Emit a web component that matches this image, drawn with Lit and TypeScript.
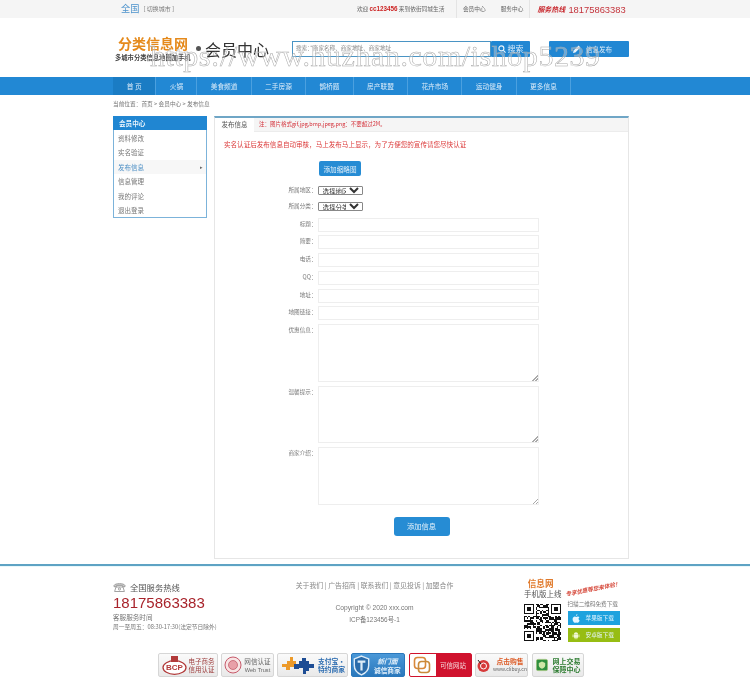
import { LitElement, html, css, svg } from "lit";
import { customElement } from "lit/decorators.js";

const qrModules = () => {
  const n = 25;
  const out: unknown[] = [];
  let seed = 73;
  const inFinder = (x: number, y: number) =>
    (x < 8 && y < 8) || (x > n - 9 && y < 8) || (x < 8 && y > n - 9);
  for (let y = 0; y < n; y++) {
    for (let x = 0; x < n; x++) {
      seed = (seed * 137 + 51) % 1009;
      if (!inFinder(x, y) && seed % 100 < 56) out.push(svg`<rect x=${x} y=${y} width="1" height="1"/>`);
    }
  }
  for (const [fx, fy] of [[0, 0], [n - 7, 0], [0, n - 7]]) {
    out.push(svg`<path d="M${fx} ${fy}h7v7h-7zM${fx + 1} ${fy + 1}v5h5v-5zM${fx + 2} ${fy + 2}h3v3h-3z" fill-rule="evenodd"/>`);
  }
  return out;
};

@customElement("app-root")
export class AppRoot extends LitElement {
  static styles = css`
    :host { display: block; position: relative; width: 750px; height: 689px; overflow: hidden; background: #fff;
      font-family: "Noto Sans CJK SC", "Liberation Sans", sans-serif; font-size: 6.6px; color: #666; line-height: 1; }
    .page { filter: blur(0.3px); height: 689px; }
    .wm { position: absolute; left: 150px; top: 41.4px; font: 30px/1 "Liberation Serif", serif; letter-spacing: .55px; white-space: nowrap;
      color: rgba(255,255,255,.3); -webkit-text-stroke: .5px #a8a8a8; pointer-events: none; filter: blur(.25px); }

    .top { height: 18px; background: #f5f5f5; display: flex; align-items: center; padding-left: 121px; }
    .city { font-size: 9.2px; color: #4d93cc; }
    .switch { margin-left: 4px; font-size: 6px; color: #777; width: 30.5px; white-space: nowrap; }
    .welcome { margin-left: 183px; width: 99px; white-space: nowrap; font-size: 5.7px; }
    .welcome b { color: #c22; font-family: "Liberation Sans", sans-serif; font-size: 6.3px; }
    .tl { height: 18px; display: flex; align-items: center; border-left: 1px solid #e4e4e4; padding: 0 7px 0 6px; font-size: 5.7px; }
    .tl + .tl { border-left: 0; padding-left: 8px; padding-right: 6px; }
    .hot { border-left: 1px solid #e4e4e4; padding-left: 7px; display: flex; align-items: center; height: 18px; }
    .hot i { font: italic 700 7px "Noto Sans CJK SC", sans-serif; color: #c8282e; }
    .hot b { margin-left: 3px; font: 400 9.4px "Liberation Sans", sans-serif; color: #c4343c; }

    .head { height: 59px; padding-left: 113px; display: flex; box-sizing: border-box; }
    .logo { width: 85px; padding: 18px 0 0 2px; box-sizing: border-box; }
    .logo h1 { margin: 0 0 0 3px; font: 700 14px/15px "Noto Sans CJK SC", sans-serif; color: #e58a1c; }
    .logo p { margin: 4px 0 0; font-size: 6.3px; font-weight: 700; color: #444; white-space: nowrap; }
    .title { width: 94px; padding-top: 22px; box-sizing: border-box; display: flex; align-items: flex-start; font-size: 16px; line-height: 18px; color: #333; }
    .title i { width: 5px; height: 5px; border-radius: 50%; background: #555; margin: 6px 4px 0 -2px; }
    .search { margin-top: 23px; width: 199px; height: 16px; box-sizing: border-box; border: 1px solid #4a94c4; background: #fff; padding: 4px 0 0 3px; font-size: 5.6px; color: #888; white-space: nowrap; }
    .sbtn, .pub { margin-top: 23px; height: 16px; background: #2187d3; color: #dcecf8; display: flex; align-items: center; justify-content: center; border-radius: 1px; }
    .sbtn { width: 39px; gap: 2px; font-size: 8px; }
    .pub { width: 80px; margin-left: 19px; gap: 5px; font-size: 6.5px; padding-left: 7px; box-sizing: border-box; }

    nav { height: 18px; background: #2288d4; padding-left: 113px; display: flex; }
    nav a { display: flex; align-items: center; padding: 0 13.3px; border-right: 1px solid #4ba0df; color: #dcecf9; font-size: 6.7px; }
    nav a.on { background: #1a7cc4; padding: 0 13.8px; }
    .crumb { padding: 6px 0 0 113px; height: 21px; box-sizing: border-box; font-size: 5.7px; color: #777; }

    .body { display: flex; padding-left: 113px; gap: 7px; height: 443px; }
    .side { width: 94px; height: 102px; box-sizing: border-box; border: 1px solid #7cb3da; }
    .side h3 { margin: -1px -1px 0; height: 14px; background: #2086d2; color: #e8f3fb; font: 700 6.6px/14px "Noto Sans CJK SC", sans-serif; padding-left: 6px; }
    .side ul { list-style: none; margin: 0; padding: 1px 0 0 4px; }
    .side li { height: 14.4px; line-height: 14.4px; font-size: 6.5px; color: #777; display: flex; justify-content: space-between; padding-right: 3px; }
    .side li.on { background: #f7f7f7; color: #4d8fc5; margin-left: -4px; padding-left: 4px; }
    .side li.on span + span { color: #666; font-size: 5px; }

    .panel { width: 415px; box-sizing: border-box; border: 1px solid #e6e6e6; border-top: 2px solid #6fa6c6; }
    .tabs { display: flex; height: 13px; background: #f5f5f5; border-bottom: 1px solid #ececec; box-sizing: content-box; }
    .tab { width: 39px; background: #fff; text-align: center; line-height: 13px; font-size: 6.5px; color: #555; height: 14px; }
    .note { margin-left: 5px; line-height: 13px; font-size: 5.5px; color: #d4313a; }
    .warn { margin: 8px 0 0 9px; font-size: 6.55px; line-height: 8px; color: #dc3b3b; height: 8px; white-space: nowrap; }
    .thumb { display: block; margin: 13px 0 0 104px; width: 42px; height: 15px; }
    .btn { border: 0; padding: 0; background: #268cd4; border-radius: 2px; color: #e2f0fa; font: 6.6px "Noto Sans CJK SC", sans-serif; }
    form { margin-top: 9.500px; display: grid; grid-template-columns: 102.5px 221px; align-items: start; }
    label { text-align: right; font-size: 5.6px; color: #777; padding-right: 1px; white-space: nowrap; line-height: 13px; }
    select { width: 45px; height: 9px; font: 6.5px "Liberation Sans", "Noto Sans CJK SC", sans-serif; color: #333; padding: 0; margin: 0 0 7px; border: 1px solid #888; border-radius: 1px; background: #fff; }
    .sellab { line-height: 9px; }
    input, textarea { display: block; box-sizing: border-box; width: 221px; border: 1px solid #eeeeee; background: #fff; margin: 0; padding: 0; }
    input { height: 14px; margin-bottom: 3.8px; }
    textarea { height: 57.7px; margin-bottom: 3.8px; }
    textarea::-webkit-resizer { background: linear-gradient(135deg, transparent 50%, #aaa 50%, #aaa 60%, transparent 60%, transparent 75%, #aaa 75%, #aaa 85%, transparent 85%) right bottom / 6px 6px no-repeat; }
    .submit { display: block; margin: 8.300px 0 0 178.5px; width: 56px; height: 18.5px; font-size: 7.3px; border-radius: 3px; }

    footer { margin-top: 5px; border-top: 2px solid #5ea3c4; box-shadow: inset 0 1px 0 #e9f8fb; position: relative; height: 123px; box-sizing: border-box; padding-left: 113px; }
    .fcols { display: flex; height: 87px; }
    .fl { width: 155px; padding-top: 16px; box-sizing: border-box; }
    .hl { display: flex; align-items: center; gap: 4px; font-size: 8.3px; color: #555; height: 10px; }
    .tel { font: 400 15px/16px "Liberation Sans", sans-serif; color: #a8232b; margin-top: 3px; }
    .fl p { margin: 3px 0 0; font-size: 6.6px; color: #777; white-space: nowrap; }
    .fl p + p { margin-top: 3.5px; font-size: 5.75px; }
    .fc { width: 185px; padding-top: 15.5px; box-sizing: border-box; text-align: center; font-size: 6.9px; color: #888; margin-left: 14px; }
    .fc div { white-space: nowrap; }
    .copy { margin-top: 16.3px; color: #777; font-family: "Liberation Sans", "Noto Sans CJK SC", sans-serif; font-size: 6.65px; }
    .icp { margin-top: 5.4px; color: #777; font-family: "Liberation Sans", "Noto Sans CJK SC", sans-serif; font-size: 6.4px; }
    .fr { margin-left: 57px; width: 100px; padding-top: 13px; box-sizing: border-box; position: relative; flex: none; }
    .fr h4 { margin: 0 0 0 3.7px; font: 700 8.6px/9px "Noto Sans CJK SC", sans-serif; color: #e07a2c; }
    .fr .mob { margin-top: 2px; font-size: 7.5px; line-height: 8px; color: #555; }
    .slogan { position: absolute; left: 41px; top: 18.7px; font: italic 700 5.6px "Noto Sans CJK SC", sans-serif; color: #d6493b; transform: rotate(-11deg); white-space: nowrap; }
    .qrrow { display: flex; margin-top: 6px; gap: 6.5px; }
    .qrrow > svg { width: 37px; height: 37px; display: block; }
    .dl { margin-top: -3px; font-size: 5.6px; color: #777; line-height: 6px; width: 52px; white-space: nowrap; }
    .app { height: 14px; margin-top: 3px; display: flex; align-items: center; gap: 6px; padding-left: 4px; box-sizing: border-box; color: #e6f6ff; font-size: 5.7px; }
    .app.ios { background: #1ea2de; margin-top: 4px; }
    .app.and { background: #97bd13; }

    .badges { display: flex; margin-left: 45px; height: 24px; }
    .bd { height: 24px; box-sizing: border-box; border: 1px solid #d6d6d6; border-radius: 2px; background: linear-gradient(#fafafa, #e9e9e9); display: flex; align-items: center; justify-content: center; gap: 2px; font-size: 6.5px; color: #666; line-height: 8.5px; text-align: center; overflow: hidden; flex: none; white-space: nowrap; }
    .bd svg { flex: none; display: block; }
    .b1 { width: 60px; }
    .b2 { width: 53px; margin-left: 3px; font-size: 6.6px; }
    .b2 small { font: 5.6px "Liberation Sans", sans-serif; }
    .b3 { width: 71px; margin-left: 3px; font-size: 6.8px; color: #2a6bb0; font-weight: 700; }
    .b4 { width: 54px; margin-left: 3px; background: linear-gradient(#4a98d8, #2a78bc); border-color: #2a78bc; color: #e4f1fb; font-weight: 700; font-size: 6.7px; justify-content: flex-start; padding-left: 1px; gap: 4px; }
    .b4 em { font: italic 700 6.8px "Noto Sans CJK SC", sans-serif; }
    .b5 { width: 63px; margin-left: 4px; background: linear-gradient(90deg, #fff 0 42%, #d0122d 42%); border-color: #d0122d; color: #f7d8dc; justify-content: flex-start; gap: 9px; padding-left: 3px; }
    .b6 { width: 53px; margin-left: 3px; font-size: 5px; line-height: 7.5px; }
    .b6 b { color: #dc5a24; font-size: 6.8px; }
    .b7 { width: 52px; margin-left: 4px; gap: 5px; color: #2f7d32; font-weight: 700; font-size: 7px; }
    .red-t { color: #9c3b3b; }
  `;

  render() {
    const navs = ["首 页", "火锅", "美食频道", "二手房源", "鹊桥题", "房产联盟", "花卉市场", "运动健身", "更多信息"];
    const side = ["资料修改", "实名验证", "发布信息", "信息管理", "我的评论", "退出登录"];
    const inputs = ["标题", "简要", "电话", "QQ", "地址", "地图链接"];
    const areas = ["优惠信息", "温馨提示", "商家介绍"];
    return html`
      <div class="page">
        <div class="top">
          <span class="city">全国</span><span class="switch">[ 切换城市 ]</span>
          <span class="welcome">欢迎 <b>cc123456</b> 来到依街同城生活</span>
          <span class="tl">会员中心</span><span class="tl">服务中心</span>
          <span class="hot"><i>服务热线</i><b>18175863383</b></span>
        </div>

        <div class="head">
          <div class="logo"><h1>分类信息网</h1><p>多城市分类信息地图加手机</p></div>
          <div class="title"><i></i>会员中心</div>
          <div class="search">搜索：商家名称、商家地址、商家地址</div>
          <div class="sbtn">
            <svg width="8" height="8" viewBox="0 0 9 9" fill="none" stroke="#e8f3fb" stroke-width="1.3"><circle cx="3.8" cy="3.8" r="2.8"/><path d="M6 6l2.5 2.500"/></svg>
            搜索
          </div>
          <div class="pub">
            <svg width="8" height="8" viewBox="0 0 8 8" fill="#e8f3fb"><path d="M0 8l.6-2.400L5.600.6l1.800 1.800-5 5z"/></svg>
            信息发布
          </div>
        </div>

        <nav>${navs.map((n, i) => html`<a class=${i === 0 ? "on" : ""}>${n}</a>`)}</nav>
        <div class="crumb">当前位置：首页 &gt; 会员中心 &gt; 发布信息</div>

        <div class="body">
          <aside class="side">
            <h3>会员中心</h3>
            <ul>${side.map((s, i) => html`<li class=${i === 2 ? "on" : ""}><span>${s}</span>${i === 2 ? html`<span>▸</span>` : ""}</li>`)}</ul>
          </aside>
          <section class="panel">
            <div class="tabs"><div class="tab">发布信息</div><div class="note">注：图片格式gif,jpg,bmp,jpeg,png：不要超过2M。</div></div>
            <div class="warn">实名认证后发布信息自动审核，马上发布马上显示，为了方便您的宣传请您尽快认证</div>
            <button class="btn thumb" type="button">添加缩略图</button>
            <form>
              <label class="sellab">所属地区：</label><select><option>选择地区</option></select>
              <label class="sellab">所属分类：</label><select><option>选择分类</option></select>
              ${inputs.map((l) => html`<label>${l}：</label><input type="text" />`)}
              ${areas.map((l) => html`<label>${l}：</label><textarea></textarea>`)}
            </form>
            <button class="btn submit" type="button">添加信息</button>
          </section>
        </div>

        <footer>
          <div class="fcols">
            <div class="fl">
              <div class="hl">
                <svg width="13" height="10" viewBox="0 0 13 10" fill="none" stroke="#999" stroke-width=".9"><path d="M1 3.500C2 1 11 1 12 3.500v1.200H9.400V3.400H3.600v1.300H1z" fill="#ccc"/><path d="M3 5h7l1.400 4.500H1.600z"/><circle cx="6.500" cy="7" r="1.100"/></svg>
                全国服务热线
              </div>
              <div class="tel">18175863383</div>
              <p>客服服务时间</p>
              <p>周一至周五：08:30-17:30(法定节日除外)</p>
            </div>
            <div class="fc">
              <div>关于我们 | 广告招商 | 联系我们 | 意见投诉 | 加盟合作</div>
              <div class="copy">Copyright © 2020 xxx.com</div>
              <div class="icp">ICP备123456号-1</div>
            </div>
            <div class="fr">
              <h4>信息网</h4>
              <div class="mob">手机版上线</div>
              <div class="slogan">专享优惠等您来体验！</div>
              <div class="qrrow">
                <svg viewBox="0 0 25 25" fill="#111" shape-rendering="crispEdges">${qrModules()}</svg>
                <div class="dl">
                  扫描二维码免费下载
                  <div class="app ios">
                    <svg width="8" height="9" viewBox="0 0 8 9" fill="#e6f6ff"><path d="M5.400.2c0 .9-.7 1.600-1.500 1.600C3.900.9 4.600.2 5.400.2zM6.600 4.800c0-.9.6-1.300.9-1.500-.5-.7-1.300-.8-1.600-.8-.7 0-1.200.4-1.600.4s-.9-.4-1.500-.4C1.900 2.500.6 3.300.6 5.200.6 6.700 1.800 8.800 2.800 8.800c.5 0 .8-.4 1.400-.4s.8.400 1.400.4c1 0 1.800-1.600 2-2.300-.1 0-1-.5-1-1.700z"/></svg>
                    <span>苹果版下载</span>
                  </div>
                  <div class="app and">
                    <svg width="8" height="9" viewBox="0 0 8 9" fill="#f1f8d8"><path d="M2 3.300h4v3.400H5.300v1.600h-.8V6.700h-1v1.600h-.8V6.700H2zM2 3c0-1 .9-1.800 2-1.800S6 2 6 3zM.6 3.400h.9v2.800H.6zM6.500 3.400h.9v2.800h-.9z"/></svg>
                    <span>安卓版下载</span>
                  </div>
                </div>
              </div>
            </div>
          </div>

          <div class="badges">
            <div class="bd b1">
              <svg width="25" height="19" viewBox="0 0 25 19"><ellipse cx="12.500" cy="11.500" rx="11.500" ry="6.800" fill="#fff" stroke="#b23a3a" stroke-width="1.300"/><rect x="9" y="0" width="7" height="6" fill="#b23a3a"/><text x="12.500" y="14" text-anchor="middle" font-family="Liberation Sans" font-weight="700" font-size="8" fill="#b23a3a">BCP</text></svg>
              <span class="red-t">电子商务<br />信用认证</span>
            </div>
            <div class="bd b2">
              <svg width="18" height="18" viewBox="0 0 18 18"><circle cx="9" cy="9" r="8" fill="#f8e4e4" stroke="#c65a6a"/><circle cx="9" cy="9" r="4.500" fill="#e8a0a8" stroke="#b5404f" stroke-width=".6"/></svg>
              <span>网信认证<br /><small>Web Trust</small></span>
            </div>
            <div class="bd b3">
              <svg width="36" height="20" viewBox="0 0 34 20"><path d="M1 9h5V6h3V2h3v4h3v3h-2v3H9v3H5v-3H1z" fill="#ec9a2a"/><path d="M13 9h5V6h3V3h4v3h3v3h5v4h-5v3h-3v3h-3v-6h-4v1h-5z" fill="#1e4d94"/></svg>
              <span>支付宝·<br />特约商家</span>
            </div>
            <div class="bd b4">
              <svg width="17" height="21" viewBox="0 0 15 19"><path d="M7.500 1l6.500 2.500v6c0 4-3 7-6.500 8.500C4 16.500 1 13.500 1 9.500v-6z" fill="#2a6cab" stroke="#dcebf7" stroke-width="1.300"/><path d="M4 5h7v2H8.500v7h-2V7H4z" fill="#dcebf7"/></svg>
              <span><em>新门面</em><br />诚信商家</span>
            </div>
            <div class="bd b5">
              <svg width="18" height="18" viewBox="0 0 18 18" fill="none" stroke="#d8883a" stroke-width="1.600"><rect x="1.500" y="1.500" width="11" height="11" rx="3"/><rect x="5.500" y="5.500" width="11" height="11" rx="3" stroke="#c98a3a"/></svg>
              <span>可信网站</span>
            </div>
            <div class="bd b6">
              <svg width="15" height="16" viewBox="0 0 15 16"><circle cx="7.500" cy="9" r="6" fill="#d63a3a"/><circle cx="7.500" cy="9" r="3" fill="none" stroke="#fff"/><path d="M2 3l3 4" stroke="#222"/></svg>
              <span><b>点击购售</b><br />www.clibuy.cn</span>
            </div>
            <div class="bd b7">
              <svg width="12" height="14" viewBox="0 0 15 15"><rect x=".5" y=".5" width="14" height="14" rx="2" fill="#2f8f3f" stroke="#9cc27a"/><path d="M7.500 3l4 2v3c0 2-2 3.500-4 4.300C5.500 11.500 3.500 10 3.500 8V5z" fill="#cfe6a8"/></svg>
              <span>网上交易<br />保障中心</span>
            </div>
          </div>
        </footer>
      </div>
      <div class="wm">https://www.huzhan.com/ishop5239</div>
    `;
  }
}
